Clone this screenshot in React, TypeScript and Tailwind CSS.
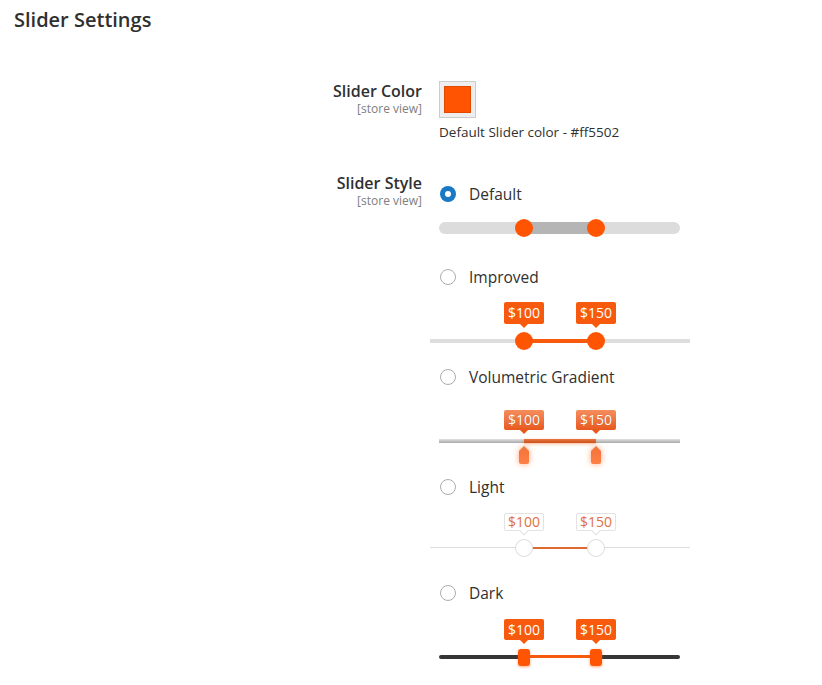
import React from 'react'

type Variant = 'default' | 'improved' | 'volumetric' | 'light' | 'dark'

// handle positions along the 260px slider box, computed from the price values
const MIN = 41
const MAX = 208
const TRACK_X = 9
const TRACK_W = 241
const pos = (v: number) => Math.round(TRACK_X + ((v - MIN) / (MAX - MIN)) * TRACK_W)
const LO = pos(100)
const HI = pos(150)

const Radio: React.FC<{ checked?: boolean; label: string }> = ({ checked, label }) => (
  <label className="flex h-6 items-center gap-[13px] pl-px">
    {checked ? (
      <span className="flex h-4 w-4 items-center justify-center rounded-full bg-[#1979c3]">
        <span className="h-[6px] w-[6px] rounded-full bg-white" />
      </span>
    ) : (
      <span className="h-4 w-4 rounded-full border border-[#adadad] bg-white" />
    )}
    <span className="text-[15.5px] leading-6 text-[#303030]">{label}</span>
  </label>
)

const tipStyles: Record<Exclude<Variant, 'default'>, string> = {
  improved: 'top-[13px] h-[22px] leading-[22px] bg-[#f75a0c] text-white',
  volumetric:
    'top-[21px] h-[20px] leading-[20px] bg-gradient-to-b from-[#f58d5c] to-[#e8581b] text-white [text-shadow:0_0_1px_rgba(0,0,0,0.3)]',
  light: 'top-[14px] h-[18px] leading-[16px] border border-[#e3e3e3] bg-white text-[#e0703e]',
  dark: 'top-[14px] h-[21px] leading-[21px] bg-[#f75a0c] text-white',
}

const arrowStyles: Record<Exclude<Variant, 'default'>, string> = {
  improved: 'top-full border-x-[4px] border-t-[4px] border-x-transparent border-t-[#f75a0c]',
  volumetric: 'top-full border-x-[4px] border-t-[4px] border-x-transparent border-t-[#e8581b]',
  light: 'top-[13px] h-[7px] w-[7px] rotate-45 border-b border-r border-[#e3e3e3] bg-white',
  dark: 'top-full border-x-[4px] border-t-[4px] border-x-transparent border-t-[#f75a0c]',
}

const Tip: React.FC<{ at: number; variant: Exclude<Variant, 'default'>; children: React.ReactNode }> = ({ at, variant, children }) => (
  <div
    className={`absolute w-[40px] -translate-x-1/2 rounded-[2px] text-center text-[14px] ${tipStyles[variant]}`}
    style={{ left: at }}
  >
    <span className={`absolute left-1/2 -translate-x-1/2 ${arrowStyles[variant]}`} />
    <span className="relative">{children}</span>
  </div>
)

const ArrowHandle: React.FC<{ at: number }> = ({ at }) => (
  <svg
    className="absolute top-[57px] -translate-x-1/2 drop-shadow-[0_0_3px_rgba(255,110,40,0.6)]"
    style={{ left: at }}
    width="10"
    height="18"
    viewBox="0 0 10 18"
  >
    <defs>
      <linearGradient id="vg" x1="0" y1="0" x2="0" y2="1">
        <stop offset="0" stopColor="#f0743a" />
        <stop offset="1" stopColor="#ff7f45" />
      </linearGradient>
    </defs>
    <path d="M5 0 L10 5 V16 Q10 18 8 18 H2 Q0 18 0 16 V5 Z" fill="url(#vg)" />
  </svg>
)

const config: Record<Variant, { box: string; track: string; rail: string; range: string; handle: string }> = {
  default: {
    box: 'h-[59px]',
    track: 'top-[16px] left-[9px] right-[10px] h-[12px] rounded-full overflow-hidden',
    rail: 'bg-[#dcdcdc]',
    range: 'bg-[#b5b5b5]',
    handle: 'top-[13px] h-[18px] w-[18px] rounded-full bg-[#ff5502]',
  },
  improved: {
    box: 'h-[76px]',
    track: 'top-[50px] left-0 right-0 h-[4px]',
    rail: 'bg-[#dedede]',
    range: 'bg-[#f75a0c]',
    handle: 'top-[43px] h-[18px] w-[18px] rounded-full bg-[#ff5502]',
  },
  volumetric: {
    box: 'h-[86px]',
    track: 'top-[50px] left-[9px] right-[10px] h-[4px] rounded-full',
    rail: 'bg-gradient-to-b from-[#e2e2e2] to-[#a9a9a9]',
    range: 'bg-gradient-to-b from-[#e9773f] to-[#c9521c] shadow-[0_1px_3px_rgba(255,110,40,0.5)]',
    handle: '',
  },
  light: {
    box: 'h-[82px]',
    track: 'top-[48px] left-0 right-0 h-[2px] items-center',
    rail: 'h-px bg-[#dddddd]',
    range: 'h-[2px] bg-[#dd6a30]',
    handle: 'top-[40px] h-[18px] w-[18px] rounded-full border border-[#dcdcdc] bg-white',
  },
  dark: {
    box: 'h-[80px]',
    track: 'top-[50px] left-[9px] right-[10px] h-[4px] rounded-full overflow-hidden',
    rail: 'bg-[#363636]',
    range: 'bg-[#f75a0c] h-[3px]',
    handle: 'top-[44px] h-[17px] w-[12px] rounded-[3px] bg-[#ff5502] shadow-[0_1px_3px_rgba(255,85,2,0.5)]',
  },
}

const Slider: React.FC<{ variant: Variant }> = ({ variant }) => {
  const c = config[variant]
  const isFull = variant === 'improved' || variant === 'light'
  const start = isFull ? 0 : TRACK_X
  return (
    <div className={`relative ml-[-9px] w-[260px] ${c.box}`}>
      {variant !== 'default' && (
        <>
          <Tip at={LO} variant={variant}>$100</Tip>
          <Tip at={HI} variant={variant}>$150</Tip>
        </>
      )}
      <div className={`absolute flex ${c.track}`}>
        <div className={`self-stretch ${c.rail}`} style={{ width: LO - start }} />
        <div className={`self-stretch ${c.range}`} style={{ width: HI - LO }} />
        <div className={`flex-1 self-stretch ${c.rail}`} />
      </div>
      {variant === 'volumetric' ? (
        <>
          <ArrowHandle at={LO} />
          <ArrowHandle at={HI} />
        </>
      ) : (
        [LO, HI].map((x) => (
          <div key={x} className={`absolute -translate-x-1/2 ${c.handle}`} style={{ left: x }} />
        ))
      )}
    </div>
  )
}

const FieldLabel: React.FC<{ title: string }> = ({ title }) => (
  <div className="w-[422px] shrink-0 text-right">
    <div className="text-[16px] font-semibold leading-[22px] text-[#303030]">{title}</div>
    <div className="text-[12px] leading-[14px] text-[#808080]">[store view]</div>
  </div>
)

const styles: { variant: Variant; label: string }[] = [
  { variant: 'default', label: 'Default' },
  { variant: 'improved', label: 'Improved' },
  { variant: 'volumetric', label: 'Volumetric Gradient' },
  { variant: 'light', label: 'Light' },
  { variant: 'dark', label: 'Dark' },
]

export default function App() {
  return (
    <div className="h-[685px] w-[822px] overflow-hidden bg-white font-['Open_Sans',sans-serif] text-[#303030]">
      <h2 className="pl-[14px] pt-[6px] text-[20px] font-semibold leading-[28px] text-[#303030]">Slider Settings</h2>

      <div className="mt-[46px] flex gap-[17px]">
        <FieldLabel title="Slider Color" />
        <div className="mt-px flex flex-col gap-[5px]">
          <div className="h-[37px] w-[37px] border border-[#cccccc] bg-[#eeeeee] p-[4px]">
            <div className="h-full w-full border border-[#e04a00] bg-[#ff5502]" />
          </div>
          <div className="text-[13.5px] leading-[18px] text-[#303030]">Default Slider color - #ff5502</div>
        </div>
      </div>

      <div className="mt-[31px] flex gap-[17px]">
        <FieldLabel title="Slider Style" />
        <div className="flex flex-col pt-[10px]">
          {styles.map((s) => (
            <div key={s.variant} className="flex flex-col">
              <Radio checked={s.variant === 'default'} label={s.label} />
              <Slider variant={s.variant} />
            </div>
          ))}
        </div>
      </div>
    </div>
  )
}
